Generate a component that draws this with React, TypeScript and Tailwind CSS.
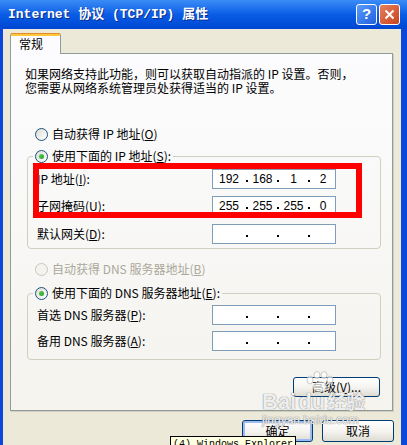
import React from "react";

const cjk = "font-['Noto_Sans_CJK_SC',sans-serif]";

function Radio({ checked, disabled }: { checked?: boolean; disabled?: boolean }) {
  return (
    <span
      className={`flex h-[13px] w-[13px] shrink-0 items-center justify-center rounded-full border ${
        disabled ? "border-[#CAC8BB] bg-[#F4F3EE]" : "border-[#1C5180] bg-gradient-to-br from-[#DCDCD7] to-white"
      }`}
    >
      {checked && <span className="h-[5px] w-[5px] rounded-full bg-gradient-to-br from-[#55D051] to-[#21A121]" />}
    </span>
  );
}

function Acc({ k }: { k: string }) {
  return (
    <>
      (<span className="underline">{k}</span>)
    </>
  );
}

function Dot() {
  return (
    <span className="flex h-full w-[4px] items-end justify-center pb-[6px]">
      <span className="h-[2px] w-[2px] bg-black" />
    </span>
  );
}

function IpField({ octets = ["", "", "", ""] }: { octets?: string[] }) {
  return (
    <div className="flex h-[20px] w-[124px] items-center border border-[#7F9DB9] bg-white font-['Liberation_Sans',sans-serif] text-[12px] text-black">
      <span className="w-[32px] text-center">{octets[0]}</span>
      <Dot />
      <span className="w-[27px] text-center">{octets[1]}</span>
      <Dot />
      <span className="w-[27px] text-center">{octets[2]}</span>
      <Dot />
      <span className="flex-1 text-center">{octets[3]}</span>
    </div>
  );
}

function Row({ label, octets, className = "" }: { label: React.ReactNode; octets?: string[]; className?: string }) {
  return (
    <div className={`flex h-[20px] items-center ${className}`}>
      <span className="w-[175px]">{label}</span>
      <IpField octets={octets} />
    </div>
  );
}

function XpButton({ children, primary, className = "" }: { children: React.ReactNode; primary?: boolean; className?: string }) {
  return (
    <div
      className={`flex items-center justify-center rounded-[3px] border border-[#003C74] bg-gradient-to-b from-white via-[#F5F4F0] to-[#DEDCD2] text-[12px] text-black ${
        primary ? "shadow-[inset_0_0_0_2px_#9DBBF0]" : ""
      } ${className}`}
    >
      {children}
    </div>
  );
}

export default function App() {
  return (
    <div className={`relative flex h-[445px] w-[407px] flex-col overflow-hidden bg-[#0A47DA] ${cjk}`}>
      {/* title bar */}
      <div className="flex h-[29px] items-center bg-gradient-to-b from-[#3A8CF6] via-[#0A5CE6] to-[#0046D2] pl-[8px] pr-[7px]">
        <span className="flex-1 font-['Liberation_Mono','Noto_Sans_CJK_SC',monospace] text-[13px] font-bold text-white [text-shadow:1px_1px_0_#0A2E8C]">
          Internet 协议 (TCP/IP) 属性
        </span>
        <div className="flex gap-[2px]">
          <div className="flex h-[21px] w-[21px] items-center justify-center rounded-[3px] border border-white bg-gradient-to-br from-[#5C9CFB] to-[#1F5FDD] font-['Liberation_Sans',sans-serif] text-[15px] font-bold text-white">
            ?
          </div>
          <div className="flex h-[21px] w-[21px] items-center justify-center rounded-[3px] border border-white bg-gradient-to-br from-[#E8805C] to-[#C8401C]">
            <svg width="11" height="11" viewBox="0 0 11 11">
              <path d="M1.5 1.5 L9.5 9.5 M9.5 1.5 L1.5 9.5" stroke="white" strokeWidth="2" />
            </svg>
          </div>
        </div>
      </div>

      <div className="flex flex-1">
        <div className="w-[3px] bg-[#0A47DA]" />
        <div className="flex flex-1 flex-col bg-[#ECE9D8] pt-[4px] text-[12px] text-black">
          {/* tab */}
          <div className="relative z-10 -mb-[1px] ml-[7px] flex h-[21px] w-[51px] flex-col rounded-t-[3px] border-x border-[#919B9C] bg-[#FCFCFE]">
            <div className="h-[1px] bg-[#E68B2C]" />
            <div className="h-[2px] bg-[#FFC73C]" />
            <span className="pl-[8px] leading-[15px]">常规</span>
          </div>

          {/* panel */}
          <div className="relative ml-[7px] mr-[8px] flex h-[358px] flex-col border border-[#919B9C] bg-gradient-to-b from-[#FCFCFE] to-[#F4F3EE] pl-[14px] pr-[11px] pt-[13px] shadow-[1px_1px_0_#D0CEBF]">
            <p className="leading-[14px]">
              如果网络支持此功能，则可以获取自动指派的 IP 设置。否则，
              <br />
              您需要从网络系统管理员处获得适当的 IP 设置。
            </p>

            <div className="mt-[32px] flex h-[14px] items-center gap-[4px] pl-[10px]">
              <Radio />
              <span>
                自动获得 IP 地址<Acc k="O" />
              </span>
            </div>

            <fieldset className="ml-[2px] mt-[8px] rounded-[4px] border border-[#D0D0BF] pb-[4px] pl-[9px] pt-[6px]">
              <legend className="-ml-[4px] px-[2px]">
                <span className="flex h-[14px] items-center gap-[4px]">
                  <Radio checked />
                  <span>
                    使用下面的 IP 地址<Acc k="S" />:
                  </span>
                </span>
              </legend>
              <Row label={<>IP 地址<Acc k="I" />:</>} octets={["192", "168", "1", "2"]} />
              <Row label={<>子网掩码<Acc k="U" />:</>} octets={["255", "255", "255", "0"]} className="mt-[7px]" />
              <Row label={<>默认网关<Acc k="D" />:</>} className="mt-[8px]" />
            </fieldset>

            <div className="mt-[13px] flex h-[14px] items-center gap-[4px] pl-[10px] text-[#ACA899]">
              <Radio disabled />
              <span>
                自动获得 DNS 服务器地址<Acc k="B" />
              </span>
            </div>

            <fieldset className="ml-[2px] mt-[10px] rounded-[4px] border border-[#D0D0BF] pb-[8px] pl-[9px] pt-[5px]">
              <legend className="-ml-[4px] px-[2px]">
                <span className="flex h-[14px] items-center gap-[4px]">
                  <Radio checked />
                  <span>
                    使用下面的 DNS 服务器地址<Acc k="E" />:
                  </span>
                </span>
              </legend>
              <Row label={<>首选 DNS 服务器<Acc k="P" />:</>} />
              <Row label={<>备用 DNS 服务器<Acc k="A" />:</>} className="mt-[6px]" />
            </fieldset>

            <div className="mt-[17px] flex justify-end pr-[1px]">
              <XpButton className="h-[20px] w-[87px]">
                高级<Acc k="V" />...
              </XpButton>
            </div>

            {/* red annotation */}
            <div className="absolute left-[22px] top-[109px] h-[55px] w-[329px] border-[6px] border-[#FF0000]" />
          </div>

          <div className="mt-[9px] flex justify-end gap-[9px] pr-[7px]">
            <XpButton primary className="h-[22px] w-[71px]">
              确定
            </XpButton>
            <XpButton className="h-[22px] w-[72px]">取消</XpButton>
          </div>
        </div>
        <div className="w-[6px] bg-[#0A47DA]" />
      </div>

      {/* watermark */}
      <div className="pointer-events-none absolute left-[262px] top-[371px] flex flex-col items-start">
        <svg width="40" height="22" viewBox="0 0 40 22" className="ml-[38px] opacity-70">
          <ellipse cx="20" cy="16" rx="7" ry="5" fill="white" stroke="#B8B8B8" />
          <ellipse cx="10" cy="9" rx="3" ry="4" fill="white" stroke="#B8B8B8" />
          <ellipse cx="17" cy="4" rx="3" ry="3.5" fill="white" stroke="#B8B8B8" />
          <ellipse cx="24" cy="4" rx="3" ry="3.5" fill="white" stroke="#B8B8B8" />
          <ellipse cx="30" cy="9" rx="3" ry="4" fill="white" stroke="#B8B8B8" />
        </svg>
        <span className="-mt-[2px] font-['Liberation_Sans','Noto_Sans_CJK_SC',sans-serif] text-[22px] font-bold leading-[22px] text-white/85 [text-shadow:0_0_1px_#8A8A8A,0_0_1px_#8A8A8A]">
          Bai<span className="ml-[2px]">du</span>
          <span className="ml-[2px] text-[19px]">经验</span>
        </span>
        <span className="font-['Liberation_Sans',sans-serif] text-[12px] leading-[12px] text-white/85 [text-shadow:0_0_1px_#8A8A8A,0_0_1px_#8A8A8A]">
          jingyan.baidu.com
        </span>
      </div>

      {/* tooltip */}
      <div className="absolute left-[170px] top-[436px] h-[20px] w-[126px] whitespace-nowrap border border-black bg-[#FFFFE1] px-[2px] pt-[2px] font-['Liberation_Mono',monospace] text-[10px] leading-[12px] text-black">
        (4) Windows Explorer
      </div>
    </div>
  );
}
